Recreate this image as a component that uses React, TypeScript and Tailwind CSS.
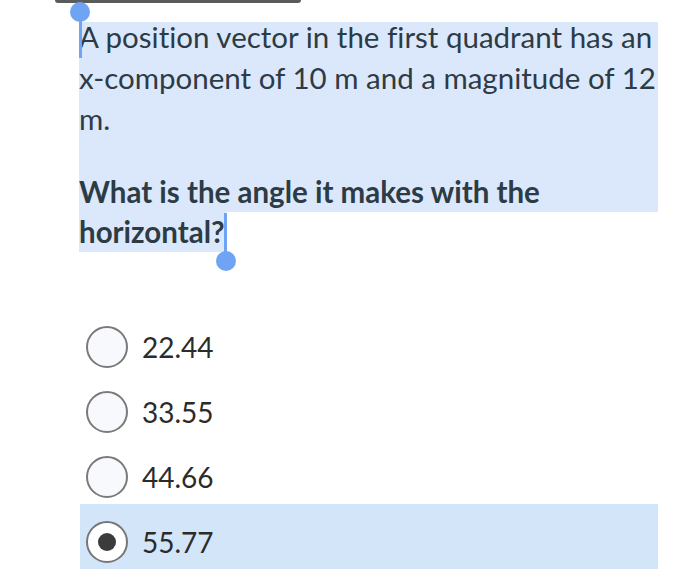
const options = [
  { label: '22.44', selected: false },
  { label: '33.55', selected: false },
  { label: '44.66', selected: false },
  { label: '55.77', selected: true },
];

const Radio = ({ checked }: { checked: boolean }) => (
  <span
    className={
      checked
        ? 'flex h-[42px] w-[42px] shrink-0 items-center justify-center rounded-full border-2 border-[#777777] bg-white'
        : 'flex h-[42px] w-[42px] shrink-0 items-center justify-center rounded-full border-2 border-[#7a7a7a] bg-[#f8f9fc]'
    }
  >
    {checked && <span className="h-[18px] w-[18px] rounded-full bg-[#3b3b3d]" />}
  </span>
);

export default function App() {
  return (
    <div
      className="relative h-[574px] w-[700px] overflow-hidden bg-white [font-variant-ligatures:none]"
      style={{ fontFamily: 'Lato, "Noto Sans", sans-serif' }}
    >
      {/* cut-off bar at the top */}
      <div className="ml-[55px] h-[3px] w-[246px] rounded-b-[3px] bg-[#5b5b5b]" />

      <div className="ml-[79px] mt-[19px] w-[579px] text-[#2d3b45]">
        <div className="flex flex-col bg-[#dbe8fc]">
          <p className="-mt-[6px] text-[29.5px] leading-[41px]">
            A position vector in the first quadrant has an x-component of 10 m and a magnitude of 12 m.
          </p>
          <p className="mt-[33px] text-[29.5px] font-bold leading-[40px]">What is the angle it makes with the</p>
        </div>
        <p className="text-[29.5px] font-bold leading-[40px]">
          <span className="inline-block bg-[#dbe8fc] pr-[1px]">horizontal?</span>
        </p>
      </div>

      <div className="ml-[80px] mt-[57px] w-[578px]">
        {options.map((o) => (
          <label
            key={o.label}
            className={
              o.selected
                ? 'flex h-[65px] items-center gap-[14px] bg-[#d3e5f8] pl-[6px] pt-[10px]'
                : 'flex h-[65px] items-center gap-[14px] pl-[6px] pt-[10px]'
            }
          >
            <Radio checked={o.selected} />
            <span className="text-[28px] text-[#2b2b2b]">{o.label}</span>
          </label>
        ))}
      </div>

      {/* selection handles */}
      <div className="absolute left-[79px] top-[12px] h-[46px] w-[3px] bg-[#6fa4f4]" />
      <div className="absolute left-[70px] top-[2px] h-[20px] w-[20px] rounded-full bg-[#6fa4f4]" />
      <div className="absolute left-[224px] top-[213px] h-[45px] w-[3px] bg-[#6fa4f4]" />
      <div className="absolute left-[216px] top-[251px] h-[20px] w-[20px] rounded-full bg-[#6fa4f4]" />
    </div>
  );
}
